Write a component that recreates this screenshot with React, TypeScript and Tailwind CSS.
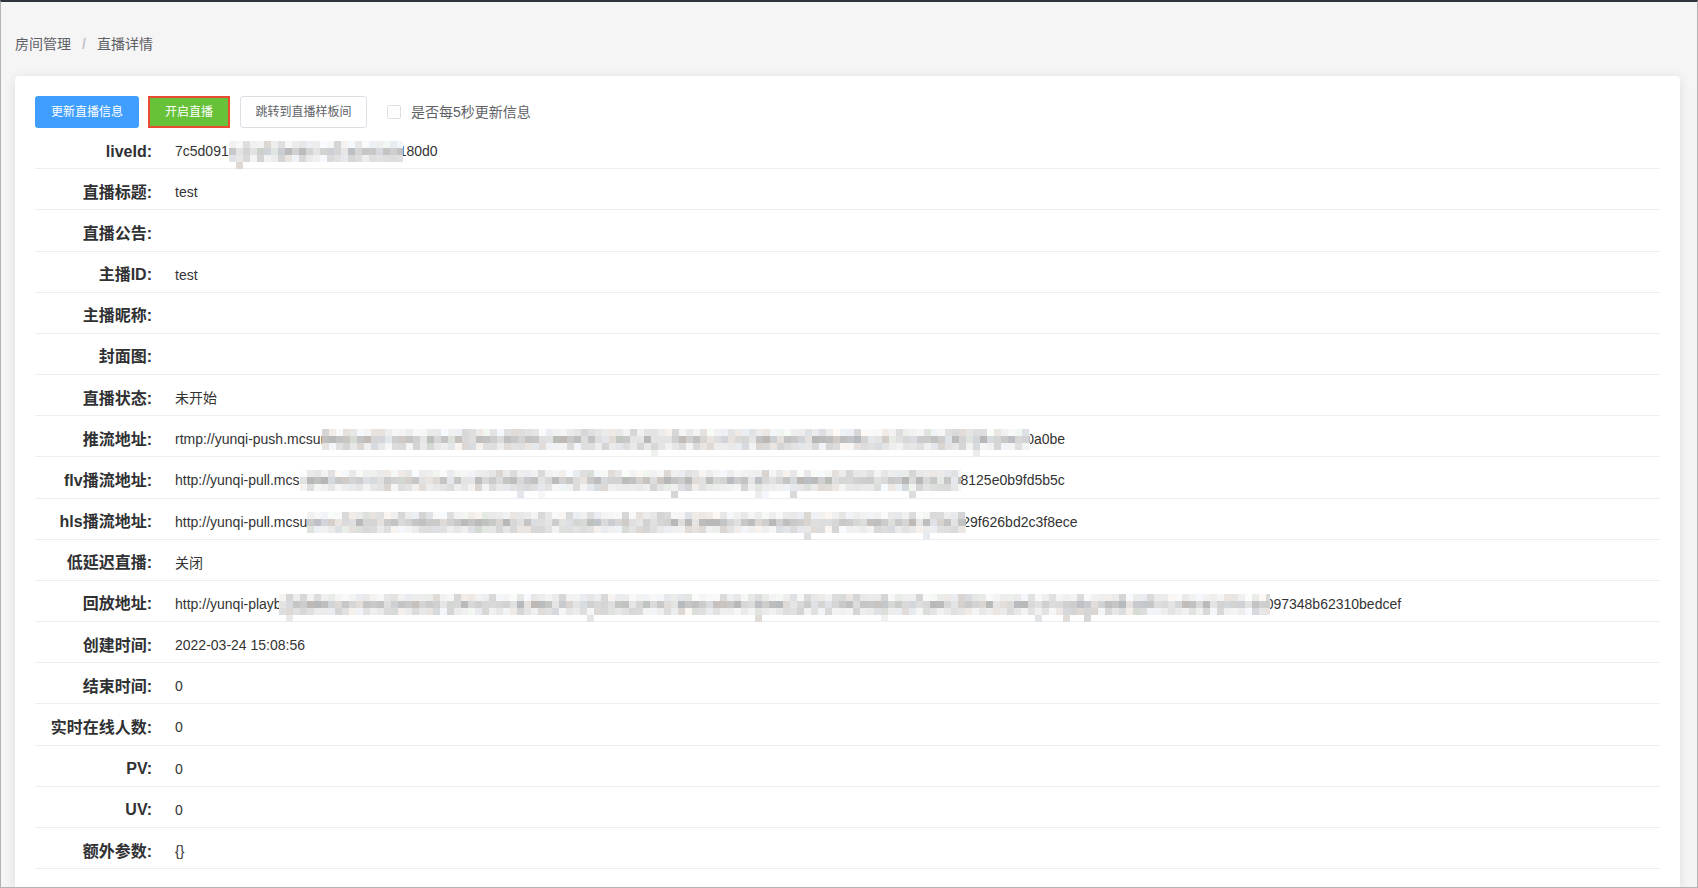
import React from 'react';

const FONT = '"Liberation Sans", "Noto Sans CJK SC", sans-serif';

// seeded random so the mosaic looks the same on every render
function mulberry32(a: number) {
  return () => {
    a |= 0;
    a = (a + 0x6d2b79f5) | 0;
    let t = Math.imul(a ^ (a >>> 15), 1 | a);
    t = (t + Math.imul(t ^ (t >>> 7), 61 | t)) ^ t;
    return ((t ^ (t >>> 14)) >>> 0) / 4294967296;
  };
}

const cellColor = (rand: () => number, row: number) => {
  let base: number;
  if (row === 0) base = rand() < 0.25 ? 212 + rand() * 18 : 230 + rand() * 20;
  else if (row === 1) base = 182 + rand() * 48;
  else base = 212 + rand() * 34;
  const tint = rand();
  let r = base, g = base, b = base;
  if (tint < 0.15) { b += 8; g += 3; }
  else if (tint < 0.28) { r += 6; b -= 4; }
  else if (tint < 0.36) { g += 5; }
  const c = (v: number) => Math.max(0, Math.min(255, Math.round(v)));
  return `rgb(${c(r)},${c(g)},${c(b)})`;
};

const Mosaic: React.FC<{ width: number; seed: number }> = ({ width, seed }) => {
  const rand = mulberry32(seed);
  const count = Math.ceil(width / 7);
  const rows = [0, 1, 2].map((row) =>
    Array.from({ length: count }, () => cellColor(rand, row))
  );
  const extra = Array.from({ length: count }, () => (rand() < 0.05 ? cellColor(rand, 2) : 'transparent'));
  return (
    <div className="relative h-[21px] shrink-0" style={{ width }}>
      <div className="flex h-[21px] flex-col overflow-hidden" style={{ width }}>
        {rows.map((cells, i) => (
          <div key={i} className="flex h-[7px] shrink-0">
            {cells.map((bg, j) => (
              <div key={j} className="h-[7px] w-[7px] shrink-0" style={{ background: bg }} />
            ))}
          </div>
        ))}
      </div>
      <div className="absolute left-0 top-[21px] flex h-[7px] overflow-hidden" style={{ width }}>
        {extra.map((bg, j) => (
          <div key={j} className="h-[7px] w-[7px] shrink-0" style={{ background: bg }} />
        ))}
      </div>
    </div>
  );
};

interface MaskedProps {
  head: string;
  tail: string;
  width: number;
  seed: number;
  className?: string;
}

const Masked: React.FC<MaskedProps> = ({ head, tail, width, seed, className }) => (
  <div className="flex items-center">
    <span>{head}</span>
    <div className={`relative z-10 ${className || ''}`}>
      <Mosaic width={width} seed={seed} />
    </div>
    <span>{tail}</span>
  </div>
);

const rows: { label: string; value: React.ReactNode }[] = [
  { label: 'liveId', value: <Masked head="7c5d091" tail="180d0" width={174} seed={11} className="-mr-[4px]" /> },
  { label: '直播标题', value: 'test' },
  { label: '直播公告', value: '' },
  { label: '主播ID', value: 'test' },
  { label: '主播昵称', value: '' },
  { label: '封面图', value: '' },
  { label: '直播状态', value: '未开始' },
  { label: '推流地址', value: <Masked head="rtmp://yunqi-push.mcsur" tail="0a0be" width={708} seed={23} className="-ml-[3px] -mr-[4px]" /> },
  { label: 'flv播流地址', value: <Masked head="http://yunqi-pull.mcs" tail="8125e0b9fd5b5c" width={661} seed={37} /> },
  { label: 'hls播流地址', value: <Masked head="http://yunqi-pull.mcsu" tail="29f626bd2c3f8ece" width={659} seed={41} className="-mr-[4px]" /> },
  { label: '低延迟直播', value: '关闭' },
  { label: '回放地址', value: <Masked head="http://yunqi-playb" tail="097348b62310bedcef" width={991} seed={59} className="-ml-[3px] -mr-[4px]" /> },
  { label: '创建时间', value: '2022-03-24 15:08:56' },
  { label: '结束时间', value: '0' },
  { label: '实时在线人数', value: '0' },
  { label: 'PV', value: '0' },
  { label: 'UV', value: '0' },
  { label: '额外参数', value: '{}' },
];

export default function App() {
  return (
    <div
      className="h-[888px] overflow-hidden border-x border-b border-x-[#b4b4b4] border-b-[#b4b4b4] border-t-2 border-t-[#30343c] bg-[#f5f5f5]"
      style={{ fontFamily: FONT }}
    >
      {/* breadcrumb */}
      <div className="flex h-[74px] items-start pl-[14px] pt-[31px] text-[14px] leading-[22px] text-[#5e6066]">
        <span>房间管理</span>
        <span className="mx-[11px] font-bold text-[#c0c4cc]">/</span>
        <span>直播详情</span>
      </div>

      <div className="ml-[14px] mr-[17px] rounded-[4px] bg-white p-5 shadow-[0_2px_12px_0_rgba(0,0,0,0.1)]">
        <div className="flex h-[32px] items-center text-[12px]">
          <button className="h-[32px] w-[104px] rounded-[3px] bg-[#409eff] text-white">更新直播信息</button>
          <button className="ml-[9px] h-[32px] w-[82px] border-2 border-[#ea4a2f] bg-[#67c23a] text-white">开启直播</button>
          <button className="ml-[10px] h-[32px] w-[127px] rounded-[3px] border border-[#dcdfe6] bg-white text-[#606266]">
            跳转到直播样板间
          </button>
          <label className="ml-[20px] flex items-center text-[14px] text-[#606266]">
            <span className="h-[14px] w-[14px] rounded-[2px] border border-[#dcdfe6] bg-white" />
            <span className="ml-[10px]">是否每5秒更新信息</span>
          </label>
        </div>

        {rows.map((row) => (
          <div key={row.label} className="flex h-[41.18px] items-center border-b border-[#ebeef5] pt-[7px]">
            <div className="w-[117px] shrink-0 text-right text-[16px] font-bold text-[#303133]">{row.label}:</div>
            <div className="ml-[23px] text-[14px] text-[#333]">{row.value}</div>
          </div>
        ))}
      </div>
    </div>
  );
}
